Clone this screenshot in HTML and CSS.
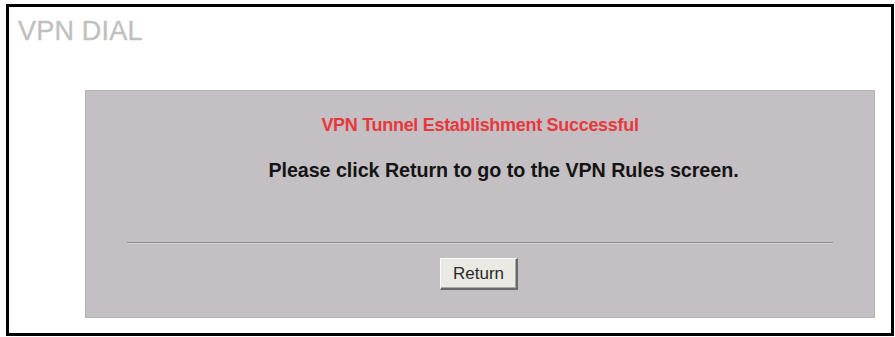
FILE: index.html
```html
<!DOCTYPE html>
<html>
<head>
<meta charset="utf-8">
<link rel="stylesheet" href="styles.css">
</head>
<body>
<div class="frame">
  <div class="title">VPN DIAL</div>
  <div class="panel">
    <div class="success">VPN Tunnel Establishment Successful</div>
    <div class="message">Please click Return to go to the VPN Rules screen.</div>
    <div class="rule"></div>
    <div class="actions"><button class="btn" type="button">Return</button></div>
  </div>
</div>
</body>
</html>
```
FILE: styles.css
```css
html, body {
  margin: 0;
  padding: 0;
  background: #ffffff;
}
body {
  width: 895px;
  height: 337px;
  overflow: hidden;
  font-family: "Liberation Sans", Arial, sans-serif;
}
.frame {
  box-sizing: border-box;
  margin: 4px 1px 0 6px;
  width: 888px;
  height: 332px;
  border: 3px solid #000;
  background: #fff;
  display: flex;
  flex-direction: column;
  padding: 9px 15px 14px 9px;
}
.title {
  font-size: 27px;
  line-height: 30px;
  height: 30px;
  color: #bfbfbf;
  letter-spacing: 0.2px;
  -webkit-text-stroke: 0.4px #c6c6c6;
}
.panel {
  box-sizing: border-box;
  margin: 44px 0 0 67px;
  width: 790px;
  height: 228px;
  background: #c3bfc3;
  border: 1px solid #b6b2b6;
  display: flex;
  flex-direction: column;
  align-items: center;
  padding-top: 23px;
}
.success {
  font-weight: bold;
  font-size: 18px;
  line-height: 22px;
  color: #e8383c;
  letter-spacing: -0.3px;
}
.message {
  margin-top: 22px;
  padding-left: 47px;
  font-weight: bold;
  font-size: 19.7px;
  line-height: 24px;
  color: #141414;
  letter-spacing: -0.05px;
}
.rule {
  align-self: flex-start;
  margin-top: 60px;
  margin-left: 41px;
  width: 706px;
  height: 0;
  border-top: 1px solid #8e8a8e;
  border-bottom: 1px solid #d6d2d6;
}
.actions {
  margin-top: 14px;
  display: flex;
  justify-content: center;
}
.btn {
  box-sizing: border-box;
  width: 78px;
  height: 32px;
  margin-right: 2px;
  background: #ebe9e3;
  border-style: solid;
  border-width: 1px 2px 2px 1px;
  border-color: #fbfbfb #6a686a #6a686a #fbfbfb;
  box-shadow: inset -1px -1px 0 #a9a7a4;
  font-family: "Liberation Sans", Arial, sans-serif;
  font-size: 17px;
  color: #2a2a2a;
  padding: 0;
}
```
